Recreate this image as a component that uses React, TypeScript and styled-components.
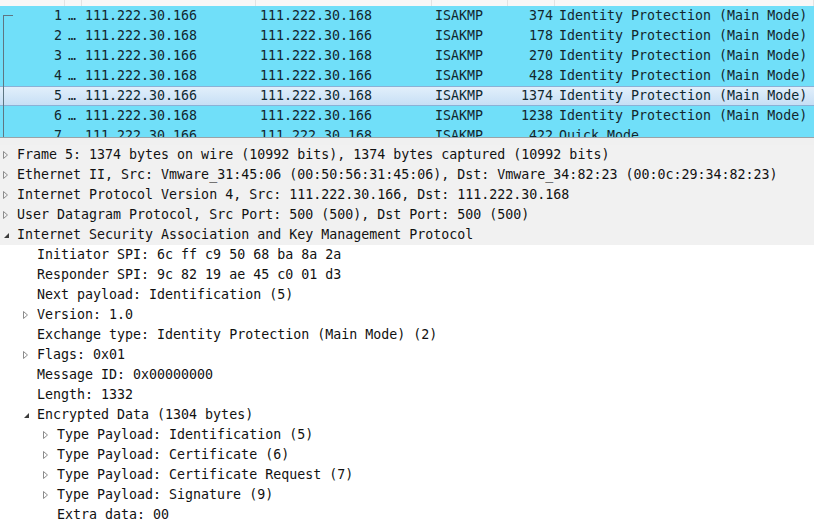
import React from "react";
import styled, { createGlobalStyle } from "styled-components";

const Global = createGlobalStyle`
  html, body { margin: 0; padding: 0; background: #ffffff; }
  body { font-family: "DejaVu Sans Mono", "Liberation Mono", monospace; }
`;

const Page = styled.div`
  width: 814px;
  height: 532px;
  overflow: hidden;
  background: #ffffff;
  display: flex;
  flex-direction: column;
`;

const PacketList = styled.div`
  position: relative;
  height: 137px;
  flex: none;
  overflow: hidden;
  border-bottom: 1px solid #9aa3a8;
`;

const COLS = "65px 17px 174px 176px 76px 47px 1fr";

const Header = styled.div`
  height: 6px;
  display: grid;
  grid-template-columns: ${COLS};
  background: #f7f7f7;
`;

const HeaderCell = styled.div`
  border-right: 1px solid #e3e3e3;
`;

const Row = styled.div<{ $selected?: boolean }>`
  height: 20px;
  box-sizing: border-box;
  display: grid;
  grid-template-columns: ${COLS};
  align-items: center;
  font-size: 13.3px;
  line-height: 20px;
  color: #12272e;
  white-space: pre;
  background: ${(p) =>
    p.$selected
      ? "linear-gradient(#e2effb, #c7dff5)"
      : "#70dff9"};
  border-top: ${(p) => (p.$selected ? "1px solid #8bb1d6" : "none")};
  border-bottom: ${(p) => (p.$selected ? "1px solid #8bb1d6" : "none")};
`;

const Cell = styled.div<{ $align?: "left" | "right"; $pl?: number; $pr?: number }>`
  overflow: hidden;
  text-align: ${(p) => p.$align || "left"};
  padding-left: ${(p) => p.$pl ?? 0}px;
  padding-right: ${(p) => p.$pr ?? 0}px;
`;

const ConvLine = styled.div`
  position: absolute;
  left: 3px;
  top: 15px;
  bottom: 0;
  width: 9px;
  border-left: 1px solid #5f7682;
  border-top: 1px solid #5f7682;
`;

const Splitter = styled.div`
  height: 7px;
  flex: none;
  background: #f0f0f0;
`;

const Tree = styled.div`
  display: flex;
  flex-direction: column;
`;

const TreeRow = styled.div<{ $level: number; $shaded?: boolean }>`
  height: 20px;
  display: flex;
  align-items: center;
  padding-left: ${(p) => p.$level * 20}px;
  background: ${(p) => (p.$shaded ? "#f1f1f1" : "#ffffff")};
  font-size: 13.3px;
  line-height: 20px;
  color: #111111;
  white-space: pre;
`;

const Toggle = styled.span`
  width: 17px;
  height: 20px;
  flex: none;
  display: flex;
  align-items: center;
  padding-left: 2px;
  box-sizing: border-box;
`;

type Kind = "closed" | "open" | "none";

const Arrow = ({ kind }: { kind: Kind }) => {
  if (kind === "closed")
    return (
      <svg width="7" height="10" viewBox="0 0 7 10">
        <polygon points="1.5,1.5 5.5,5 1.5,8.5" fill="none" stroke="#8c8c8c" strokeWidth="1" />
      </svg>
    );
  if (kind === "open")
    return (
      <svg width="8" height="10" viewBox="0 0 8 10">
        <polygon points="7,3 7,8 2,8" fill="#3c3c3c" />
      </svg>
    );
  return null;
};

const packets = [
  ["1", "111.222.30.166", "111.222.30.168", "374", "Identity Protection (Main Mode)"],
  ["2", "111.222.30.168", "111.222.30.166", "178", "Identity Protection (Main Mode)"],
  ["3", "111.222.30.166", "111.222.30.168", "270", "Identity Protection (Main Mode)"],
  ["4", "111.222.30.168", "111.222.30.166", "428", "Identity Protection (Main Mode)"],
  ["5", "111.222.30.166", "111.222.30.168", "1374", "Identity Protection (Main Mode)"],
  ["6", "111.222.30.168", "111.222.30.166", "1238", "Identity Protection (Main Mode)"],
  ["7", "111.222.30.166", "111.222.30.168", "422", "Quick Mode"],
];

const details: { level: number; kind: Kind; text: string; shaded?: boolean }[] = [
  { level: 0, kind: "closed", shaded: true, text: "Frame 5: 1374 bytes on wire (10992 bits), 1374 bytes captured (10992 bits)" },
  { level: 0, kind: "closed", shaded: true, text: "Ethernet II, Src: Vmware_31:45:06 (00:50:56:31:45:06), Dst: Vmware_34:82:23 (00:0c:29:34:82:23)" },
  { level: 0, kind: "closed", shaded: true, text: "Internet Protocol Version 4, Src: 111.222.30.166, Dst: 111.222.30.168" },
  { level: 0, kind: "closed", shaded: true, text: "User Datagram Protocol, Src Port: 500 (500), Dst Port: 500 (500)" },
  { level: 0, kind: "open", shaded: true, text: "Internet Security Association and Key Management Protocol" },
  { level: 1, kind: "none", text: "Initiator SPI: 6c ff c9 50 68 ba 8a 2a" },
  { level: 1, kind: "none", text: "Responder SPI: 9c 82 19 ae 45 c0 01 d3" },
  { level: 1, kind: "none", text: "Next payload: Identification (5)" },
  { level: 1, kind: "closed", text: "Version: 1.0" },
  { level: 1, kind: "none", text: "Exchange type: Identity Protection (Main Mode) (2)" },
  { level: 1, kind: "closed", text: "Flags: 0x01" },
  { level: 1, kind: "none", text: "Message ID: 0x00000000" },
  { level: 1, kind: "none", text: "Length: 1332" },
  { level: 1, kind: "open", text: "Encrypted Data (1304 bytes)" },
  { level: 2, kind: "closed", text: "Type Payload: Identification (5)" },
  { level: 2, kind: "closed", text: "Type Payload: Certificate (6)" },
  { level: 2, kind: "closed", text: "Type Payload: Certificate Request (7)" },
  { level: 2, kind: "closed", text: "Type Payload: Signature (9)" },
  { level: 2, kind: "none", text: "Extra data: 00" },
];

export default function App() {
  return (
    <Page>
      <Global />
      <PacketList>
        <Header>
          {Array.from({ length: 7 }).map((_, i) => (
            <HeaderCell key={i} />
          ))}
        </Header>
        {packets.map((p) => (
          <Row key={p[0]} $selected={p[0] === "5"}>
            <Cell $align="right" $pr={3}>{p[0]}</Cell>
            <Cell $pl={3}>…</Cell>
            <Cell $pl={3}>{p[1]}</Cell>
            <Cell $pl={4}>{p[2]}</Cell>
            <Cell $pl={3}>ISAKMP</Cell>
            <Cell $align="right" $pr={2}>{p[3]}</Cell>
            <Cell $pl={4}>{p[4]}</Cell>
          </Row>
        ))}
        <ConvLine />
      </PacketList>
      <Splitter />
      <Tree>
        {details.map((d, i) => (
          <TreeRow key={i} $level={d.level} $shaded={d.shaded}>
            <Toggle>
              <Arrow kind={d.kind} />
            </Toggle>
            {d.text}
          </TreeRow>
        ))}
      </Tree>
    </Page>
  );
}
